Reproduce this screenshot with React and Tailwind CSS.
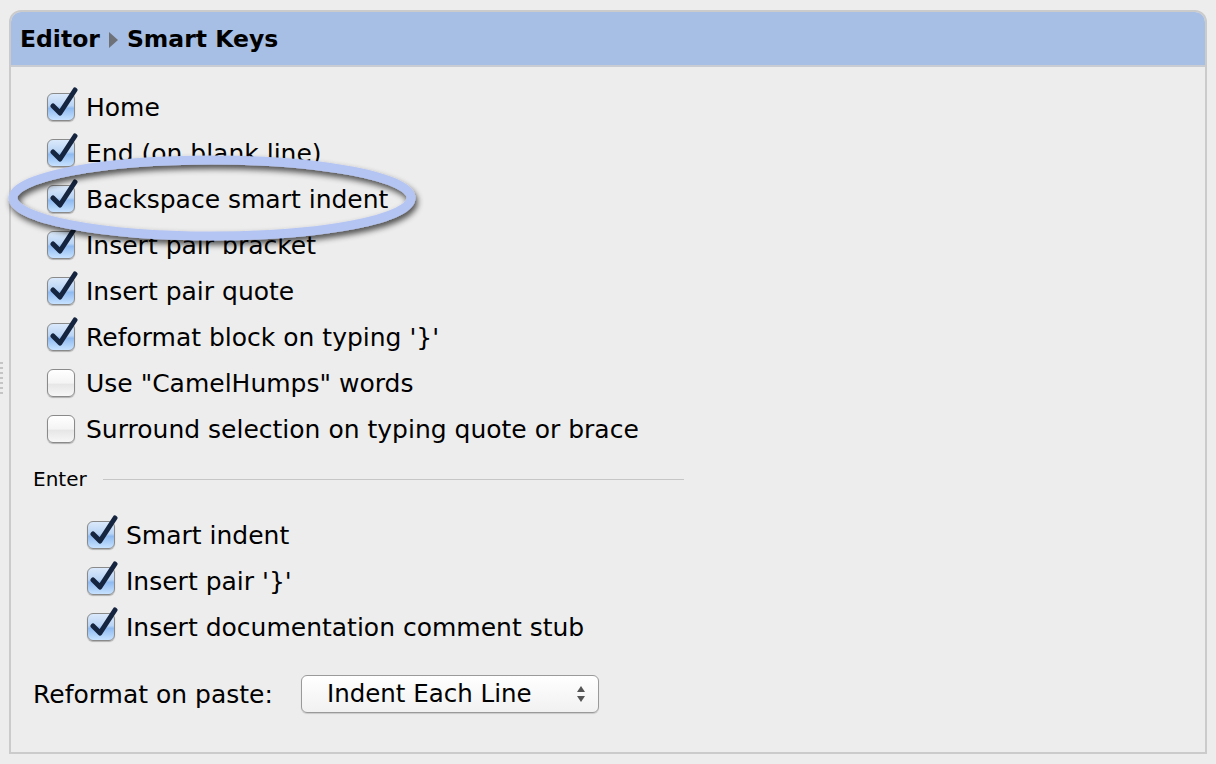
import React from "react";

function Box({ checked }) {
  return (
    <div className="relative w-[28px] h-[28px] shrink-0">
      <div
        className={
          "absolute inset-0 rounded-[6px] border border-[#8a8a8a] shadow-[0_1px_1px_rgba(0,0,0,0.25)] " +
          (checked
            ? "bg-[linear-gradient(to_bottom,#dbe9fb_0%,#b9d4f5_45%,#8fbaf0_55%,#c7e2ff_100%)]"
            : "bg-[linear-gradient(to_bottom,#ffffff_0%,#f4f4f4_50%,#e6e6e6_55%,#f7f7f7_100%)]")
        }
      />
      {checked && (
        <svg className="absolute left-[3px] top-[-7px]" width="30" height="34" viewBox="0 0 30 34">
          <path
            d="M3 20 L10 27 L25 4"
            fill="none"
            stroke="#15243f"
            strokeWidth="5"
            strokeLinecap="round"
            strokeLinejoin="round"
          />
        </svg>
      )}
    </div>
  );
}

function Row({ checked, label }) {
  return (
    <div className="h-[46px] flex items-center gap-[11px]">
      <Box checked={checked} />
      <span className="text-[25px] text-black leading-none">{label}</span>
    </div>
  );
}

export default function App() {
  const items = [
    [true, "Home"],
    [true, "End (on blank line)"],
    [true, "Backspace smart indent"],
    [true, "Insert pair bracket"],
    [true, "Insert pair quote"],
    [true, "Reformat block on typing '}'"],
    [false, 'Use "CamelHumps" words'],
    [false, "Surround selection on typing quote or brace"],
  ];
  const sub = [
    [true, "Smart indent"],
    [true, "Insert pair '}'"],
    [true, "Insert documentation comment stub"],
  ];
  return (
    <div
      className="w-[1216px] h-[764px] bg-[#ededed] pt-[10px] pl-[9px] relative overflow-hidden"
      style={{ fontFamily: '"DejaVu Sans", "Liberation Sans", sans-serif' }}
    >
      <div className="absolute left-[0px] top-[362px] flex flex-col gap-[3px]">
        {[0, 1, 2, 3, 4, 5, 6].map((i) => (
          <div key={i} className="w-[3px] h-[2px] bg-[#c4c4c4]" />
        ))}
      </div>
      <div className="w-[1198px] h-[744px] border-2 border-[#cbcbcb] rounded-t-[12px] bg-[#ededed] flex flex-col">
        <div className="h-[55px] bg-[#a7bfe4] rounded-t-[10px] border-b-2 border-[#c9cdd3] flex items-center pl-[9px] pt-[2px] text-[23.5px] font-bold text-black">
          <span>Editor</span>
          <svg className="mx-[9px]" width="9" height="16" viewBox="0 0 9 16">
            <path d="M0 0 L9 8 L0 16 Z" fill="#6e7278" />
          </svg>
          <span>Smart Keys</span>
        </div>
        <div className="flex flex-col pl-[36px] pt-[17px]">
          {items.map(([c, l], i) => (
            <Row key={i} checked={c} label={l} />
          ))}
        </div>
        <div className="flex items-center pl-[22px] h-[46px] mt-[4px]">
          <span className="text-[20px] text-black leading-none">Enter</span>
          <div className="ml-[16px] w-[581px] h-[1px] bg-[#c6c6c6]" />
        </div>
        <div className="flex flex-col pl-[76px] pt-[10px]">
          {sub.map(([c, l], i) => (
            <Row key={i} checked={c} label={l} />
          ))}
        </div>
        <div className="flex items-center pl-[22px] mt-[25px]">
          <span className="text-[25px] text-black leading-none">Reformat on paste:</span>
          <div className="ml-[28px] w-[298px] h-[38px] rounded-[6px] border border-[#9a9a9a] bg-[linear-gradient(to_bottom,#ffffff,#f1f1f1)] shadow-[0_1px_1px_rgba(0,0,0,0.15)] flex items-center pl-[25px] pr-[12px]">
            <span className="text-[24.5px] text-black leading-none flex-1">Indent Each Line</span>
            <svg width="10" height="18" viewBox="0 0 10 18">
              <path d="M5 1 L9 7 L1 7 Z" fill="#555" />
              <path d="M1 11 L9 11 L5 17 Z" fill="#555" />
            </svg>
          </div>
        </div>
      </div>
      <svg className="absolute left-0 top-[150px] pointer-events-none" width="440" height="110" viewBox="0 0 440 110">
        <defs>
          <filter id="sh" x="-10%" y="-30%" width="120%" height="170%">
            <feGaussianBlur in="SourceAlpha" stdDeviation="3" />
            <feOffset dx="2" dy="4" result="b" />
            <feComponentTransfer>
              <feFuncA type="linear" slope="0.7" />
            </feComponentTransfer>
            <feMerge>
              <feMergeNode />
              <feMergeNode in="SourceGraphic" />
            </feMerge>
          </filter>
        </defs>
        <ellipse cx="212" cy="48" rx="199" ry="38" fill="none" stroke="#b5c5f3" strokeWidth="9" filter="url(#sh)" />
      </svg>
    </div>
  );
}
